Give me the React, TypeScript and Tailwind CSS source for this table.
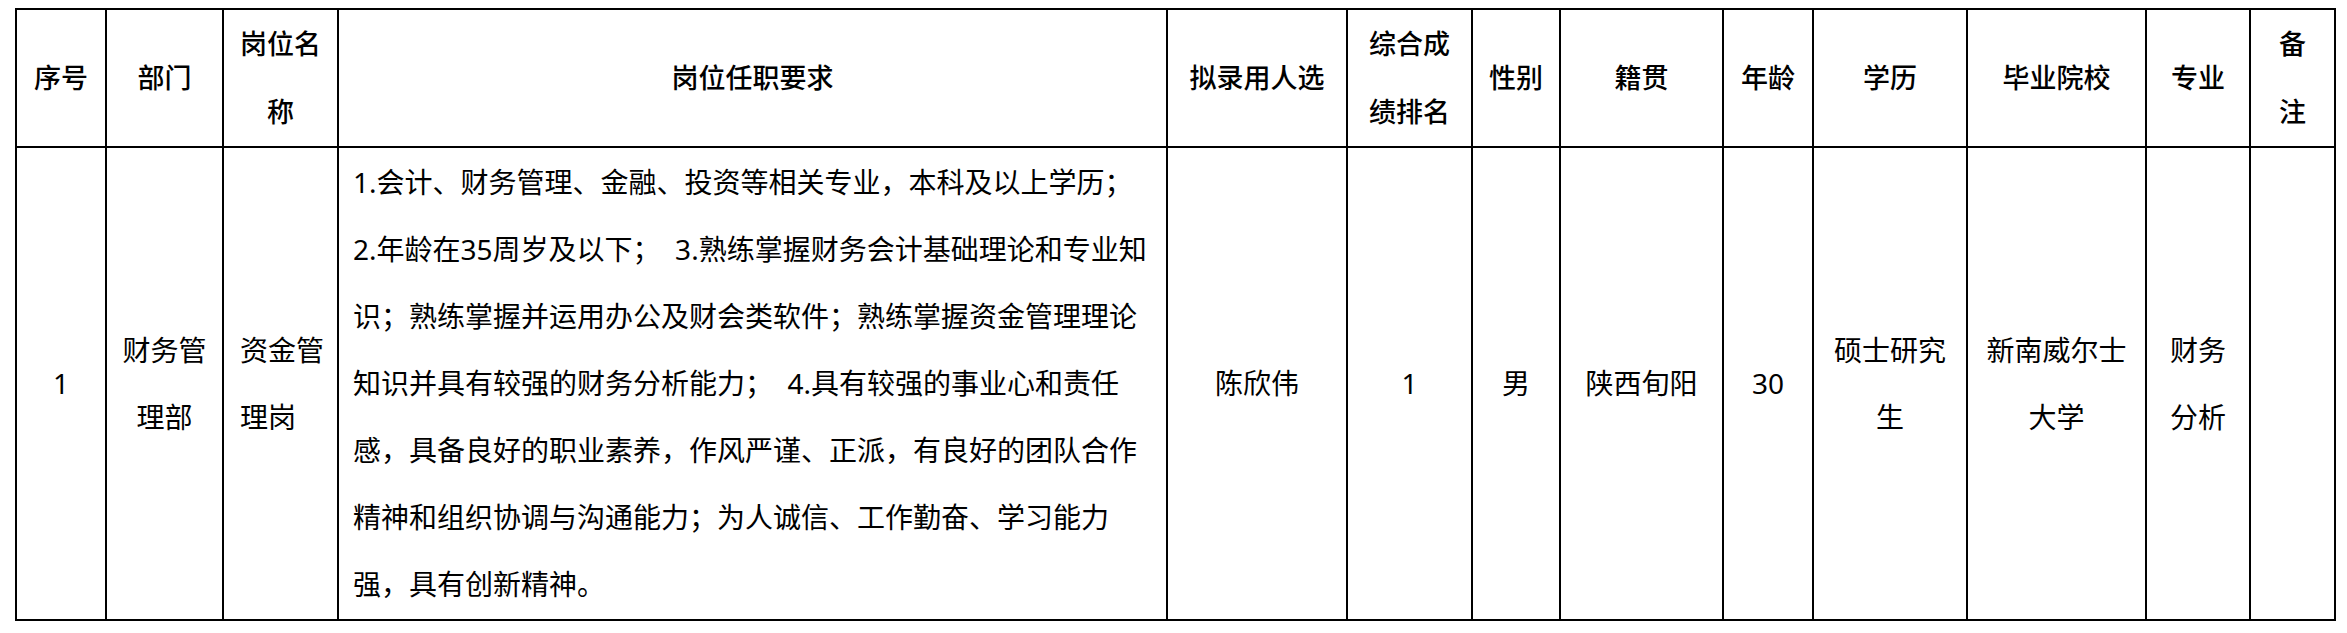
const cols = [90, 117, 115, 829, 180, 125, 88, 163, 90, 154, 179, 104, 85];

const headers: string[][] = [
  ["序号"],
  ["部门"],
  ["岗位名", "称"],
  ["岗位任职要求"],
  ["拟录用人选"],
  ["综合成", "绩排名"],
  ["性别"],
  ["籍贯"],
  ["年龄"],
  ["学历"],
  ["毕业院校"],
  ["专业"],
  ["备", "注"],
];

const requirement = [
  "1.会计、财务管理、金融、投资等相关专业，本科及以上学历；",
  "2.年龄在35周岁及以下；  3.熟练掌握财务会计基础理论和专业知",
  "识；熟练掌握并运用办公及财会类软件；熟练掌握资金管理理论",
  "知识并具有较强的财务分析能力；  4.具有较强的事业心和责任",
  "感，具备良好的职业素养，作风严谨、正派，有良好的团队合作",
  "精神和组织协调与沟通能力；为人诚信、工作勤奋、学习能力",
  "强，具有创新精神。",
];

const font = {
  fontFamily: '"Noto Sans", "Noto Sans CJK SC", sans-serif',
};

function Lines({ lines }: { lines: string[] }) {
  return (
    <>
      {lines.map((l, i) => (
        <div key={i} className="whitespace-pre">
          {l}
        </div>
      ))}
    </>
  );
}

export default function App() {
  return (
    <div className="min-h-[633px] w-[2347px] bg-white pl-[15px] pt-[8px]" style={font}>
      <table className="w-[2321px] table-fixed border-collapse border-2 border-black text-black">
        <colgroup>
          {cols.map((w, i) => (
            <col key={i} style={{ width: w }} />
          ))}
        </colgroup>
        <thead>
          <tr>
            {headers.map((h, i) => (
              <th
                key={i}
                className="h-[136px] border-2 border-black p-0 text-center align-middle text-[27px] font-medium leading-[68px]"
              >
                <Lines lines={h} />
              </th>
            ))}
          </tr>
        </thead>
        <tbody className="text-[28px] leading-[67px]">
          <tr>
            <td className="h-[473px] border-2 border-black p-0 text-center align-middle">1</td>
            <td className="border-2 border-black p-0 text-center align-middle">
              <Lines lines={["财务管", "理部"]} />
            </td>
            <td className="border-2 border-black py-0 pl-[16px] pr-0 text-left align-middle">
              <Lines lines={["资金管", "理岗"]} />
            </td>
            <td className="border-2 border-black py-0 pl-[14px] pr-0 text-left align-middle">
              <Lines lines={requirement} />
            </td>
            <td className="border-2 border-black p-0 text-center align-middle">陈欣伟</td>
            <td className="border-2 border-black p-0 text-center align-middle">1</td>
            <td className="border-2 border-black p-0 text-center align-middle">男</td>
            <td className="border-2 border-black p-0 text-center align-middle">陕西旬阳</td>
            <td className="border-2 border-black p-0 text-center align-middle">30</td>
            <td className="border-2 border-black p-0 text-center align-middle">
              <Lines lines={["硕士研究", "生"]} />
            </td>
            <td className="border-2 border-black p-0 text-center align-middle">
              <Lines lines={["新南威尔士", "大学"]} />
            </td>
            <td className="border-2 border-black p-0 text-center align-middle">
              <Lines lines={["财务", "分析"]} />
            </td>
            <td className="border-2 border-black p-0 text-center align-middle"></td>
          </tr>
        </tbody>
      </table>
    </div>
  );
}
